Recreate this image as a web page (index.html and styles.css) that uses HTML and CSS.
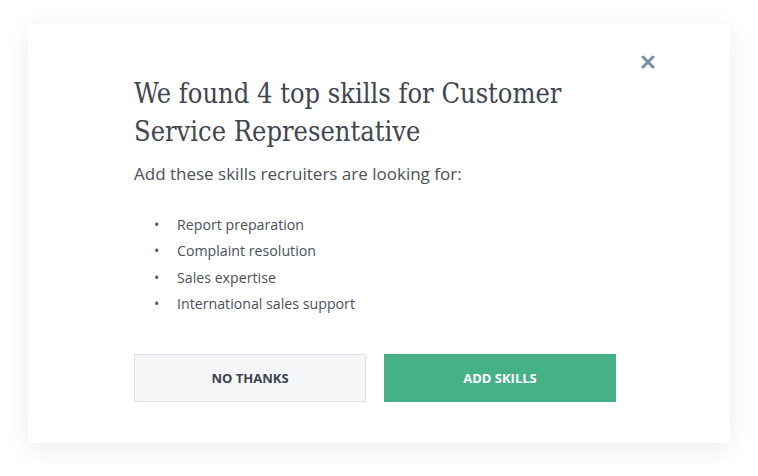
FILE: index.html
```html
<!DOCTYPE html>
<html lang="en">
<head>
  <meta charset="UTF-8" />
  <title>Add skills</title>
  <link rel="stylesheet" href="styles.css">
</head>
<body>
  <div class="modal">
    <button class="close-btn" aria-label="Close">
      <svg width="14" height="14" viewBox="0 0 14 14">
        <path d="M2 2 L12 12 M12 2 L2 12" stroke="#7b8ea9" stroke-width="3" stroke-linecap="round"/>
      </svg>
    </button>
    <div class="modal-body">
      <h2>We found 4 top skills for Customer Service Representative</h2>
      <p class="subtitle">Add these skills recruiters are looking for:</p>
      <ul class="skills">
        <li>Report preparation</li>
        <li>Complaint resolution</li>
        <li>Sales expertise</li>
        <li>International sales support</li>
      </ul>
      <div class="actions">
        <button class="btn btn-secondary">No thanks</button>
        <button class="btn btn-primary">Add skills</button>
      </div>
    </div>
  </div>
</body>
</html>
```

FILE: styles.css
```css
body {
    margin: 0;
    background-color: #ffffff;
    font-family: "Open Sans", Arial, sans-serif;
}

.modal {
    position: relative;
    margin: 24px 28px;
    height: 419px;
    box-sizing: border-box;
    background-color: #ffffff;
    box-shadow: 0 6px 24px rgba(30, 40, 60, 0.09);
    padding: 51px 100px 0 106px;
}

.close-btn {
    position: absolute;
    top: 31px;
    right: 75px;
    background: none;
    border: none;
    padding: 0;
    cursor: pointer;
    line-height: 0;
}

.modal-body h2 {
    margin: 0;
    font-family: "DejaVu Serif Condensed", "DejaVu Serif", serif;
    font-weight: normal;
    font-size: 27px;
    line-height: 38px;
    color: #41454f;
}

.subtitle {
    margin: 10px 0 0;
    font-size: 17px;
    line-height: 26px;
    color: #4b505b;
}

.skills {
    list-style: none;
    margin: 25px 0 0;
    padding-left: 20px;
    font-size: 14.2px;
    color: #4b505b;
}

.skills li {
    height: 26.4px;
    line-height: 26.4px;
}

.skills li::before {
    content: "•";
    display: inline-block;
    width: 23px;
    font-size: 14px;
    line-height: 1;
    color: #4b505b;
}

.actions {
    display: flex;
    gap: 18px;
    margin-top: 36px;
}

.btn {
    width: 232px;
    height: 48px;
    font-family: "Open Sans", Arial, sans-serif;
    font-size: 13px;
    font-weight: bold;
    text-transform: uppercase;
    cursor: pointer;
}

.btn-secondary {
    background-color: #f5f6f8;
    border: 1px solid #dde2e8;
    color: #3d4350;
}

.btn-primary {
    background-color: #46b186;
    border: 1px solid #46b186;
    color: #ffffff;
}
```
